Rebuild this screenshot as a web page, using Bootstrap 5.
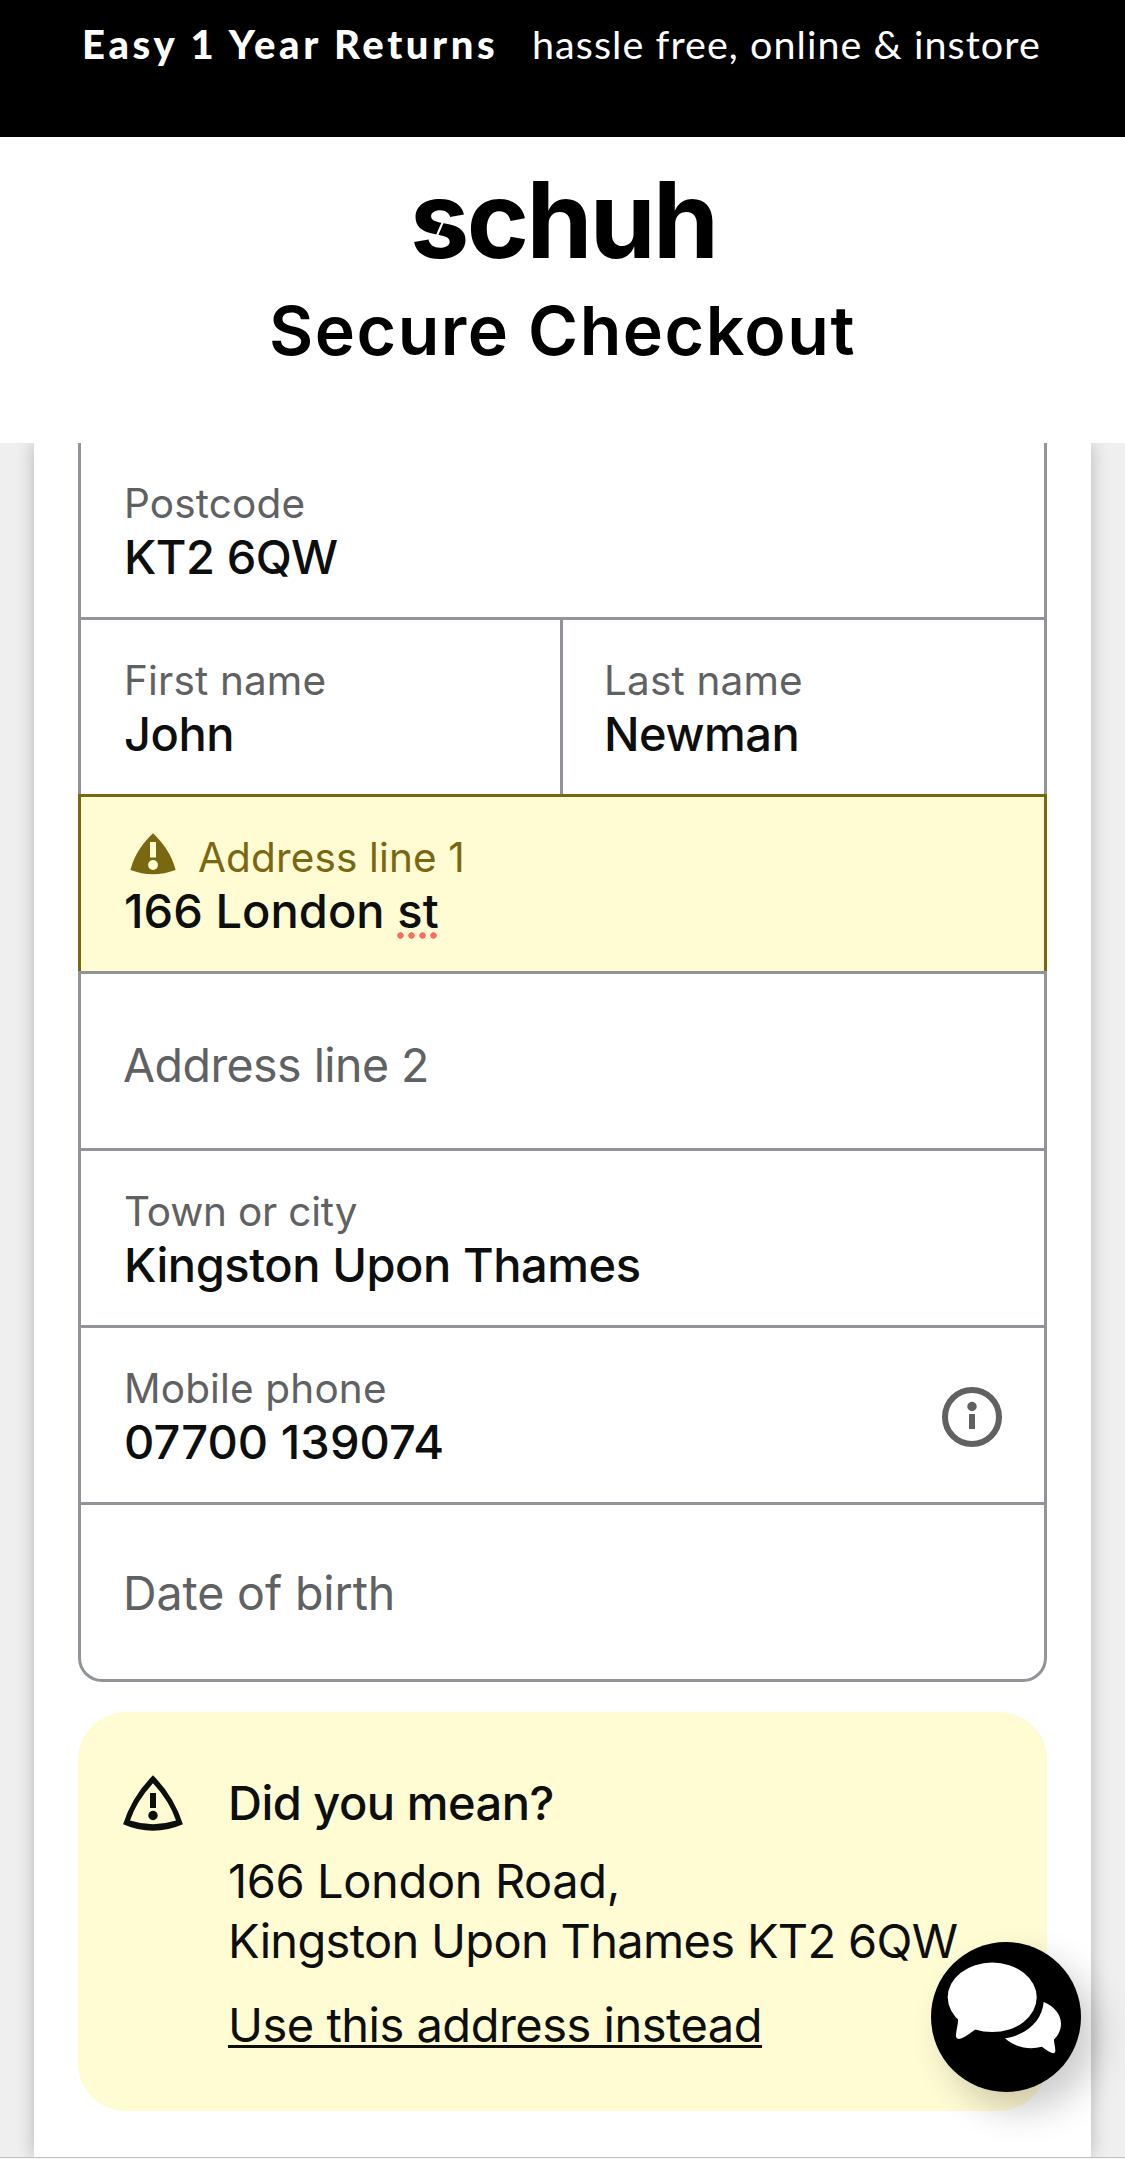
<!DOCTYPE html>
<html lang="en">
<head>
<meta charset="utf-8">
<meta name="viewport" content="width=device-width, initial-scale=1">
<title>schuh – Secure Checkout</title>
<link href="https://cdn.jsdelivr.net/npm/bootstrap@5.3.0/dist/css/bootstrap.min.css" rel="stylesheet">
<style>
  :root { --line: #919498; --ink: #0d0e0e; --muted-ink: #606162; --warn: #7a6712; --warn-bg: #fffbd3; }
  body { width: 1125px; height: 2159px; background: #efefef; color: var(--ink); font-family: Inter, "Liberation Sans", sans-serif; }
  .promo { height: 137px; padding: 20px 0 0 82px; font: 400 39.5px/47px Lato, sans-serif; }
  .promo strong { width: 450px; font-size: 40px; font-weight: 900; letter-spacing: 3.6px; }
  .promo span { letter-spacing: 1.05px; }
  .masthead { height: 306px; padding-top: 43px; z-index: 2; }
  .brand-mark { width: 300px; height: 80px; margin-left: 1px; overflow: visible; }
  .brand-mark text { font: 700 106px Inter, sans-serif; }
  .page-title { font-size: 68px; font-weight: 600; line-height: 80px; letter-spacing: 1.5px; margin: 30px 0 0 0; color: #000; }
  .sheet { width: 1057px; height: 1714px; margin-left: 34px; padding: 0 44px; box-shadow: 0 0 17px rgba(0,0,0,.24); }
  .fields { border: 3px solid var(--line); border-top: 0; border-radius: 0 0 24px 24px; }
  .field { height: 177px; padding: 36px 42px 0 42px; border-bottom: 3px solid var(--line); }
  .fields > .field:last-child { border-bottom: 0; height: 174px; }
  .field .name { font-size: 40.5px; line-height: 50px; letter-spacing: .15px; padding-left: 1px; color: var(--muted-ink); }
  .field .name.tight { letter-spacing: -.2px; }
  .field .val { font-size: 47px; line-height: 58px; margin-top: -1px; font-weight: 500; letter-spacing: -.45px; padding-left: 1px; }
  .field .val.digits { letter-spacing: .05px; }
  .field .hint { font-size: 46.5px; line-height: 58px; letter-spacing: -.55px; color: var(--muted-ink); padding-top: 26px; }
  .field .dob { padding-top: 23px; letter-spacing: -.1px; }
  .pair .field { border-bottom: 0; height: 174px; }
  .pair .field:first-child { width: 479px; }
  .pair .field:first-child { width: 481px; }
  .pair .field + .field { width: 486px; padding-left: 40px; border-left: 3px solid var(--line); }
  .pair { border-bottom: 3px solid var(--warn); margin: 0 -3px; padding: 0 3px; position: relative; }
  .flagged { background: var(--warn-bg); margin: 0 -3px; border-left: 3px solid var(--warn); border-right: 3px solid var(--warn); height: 174px; border-bottom: 0; }
  .flagged .name { color: var(--warn); gap: 22px; padding-left: 7px; }
  .after-flagged { border-top: 3px solid var(--line); height: 180px; }
  .typo { background: radial-gradient(circle at 3.5px 3.5px, #ff6b5f 2.9px, transparent 3.5px) 0 calc(100% - 1px) / 11px 7px repeat-x; display: inline-block; height: 58px; vertical-align: top; }
  .info { margin-top: 23px; }
  .suggest { height: 399px; margin-top: 30px; padding: 61px 42px 0 45px; gap: 45px; border-radius: 48px; background: var(--warn-bg); font-size: 47px; line-height: 60px; letter-spacing: -.68px; white-space: nowrap; }
  .suggest svg { margin-top: 2px; }
  .suggest .ask { font-size: 47px; line-height: 60px; font-weight: 500; letter-spacing: -.5px; }
  .suggest .place { margin: 18px 0 24px; }
  .suggest .street { letter-spacing: -.38px; }
  .suggest a { color: var(--ink); letter-spacing: -.5px; text-decoration: underline 3px; text-underline-offset: 3px; text-decoration-skip-ink: none; }
  .chat { right: 44px; top: 1942px; width: 150px; height: 150px; background: #000; box-shadow: 16px 18px 36px rgba(0,0,0,.2); z-index: 3; }
  .bottom-line { left: 0; right: 0; top: 2157px; height: 2px; background: #fafafa; border-top: 1px solid #bdbebf; z-index: 4; }
</style>
</head>
<body class="position-relative overflow-hidden">
  <div class="promo bg-black text-white d-flex align-items-baseline text-nowrap">
    <strong>Easy 1 Year Returns</strong>
    <span>hassle free, online &amp; instore</span>
  </div>
  <header class="masthead bg-white d-flex flex-column align-items-center position-relative">
    <svg class="brand-mark" viewBox="0 0 300 80" role="img" aria-label="schuh">
      <text x="-3" y="77.700" textLength="309">schuh</text>
      <line x1="32" y1="37" x2="22" y2="60" stroke="#fff" stroke-width="2"/>
    </svg>
    <h1 class="page-title text-nowrap">Secure Checkout</h1>
  </header>

  <main class="sheet bg-white">
    <section class="fields">
      <div class="field"><div class="name">Postcode</div><div class="val">KT2 6QW</div></div>
      <div class="pair d-flex">
        <div class="field"><div class="name">First name</div><div class="val">John</div></div>
        <div class="field"><div class="name">Last name</div><div class="val">Newman</div></div>
      </div>
      <div class="field flagged">
        <div class="name d-flex align-items-start">
          <svg width="46" height="42" viewBox="0 0 46 42"><path d="M23 .3C13.500 9.500 5 20 .4 37Q23 45.400 45.600 37C41 20 32.500 9.500 23 .3Z" fill="#7a6712"/><path d="M20 9h6v15.500h-6z" fill="#fffbd3"/><circle cx="23" cy="32" r="4.900" fill="#fffbd3"/></svg>
          <span>Address line 1</span>
        </div>
        <div class="val digits">166 London <span class="typo">st</span></div>
      </div>
      <div class="field after-flagged"><div class="hint">Address line 2</div></div>
      <div class="field"><div class="name tight">Town or city</div><div class="val">Kingston Upon Thames</div></div>
      <div class="field d-flex justify-content-between align-items-start">
        <div><div class="name">Mobile phone</div><div class="val digits">07700 139074</div></div>
        <svg class="info" width="60" height="60" viewBox="0 0 60 60" fill="#606162"><circle cx="30" cy="30" r="27" fill="none" stroke="#606162" stroke-width="6"/><circle cx="30" cy="19.500" r="4.700"/><path d="M27 27h6v15h-6z"/></svg>
      </div>
      <div class="field"><div class="hint dob">Date of birth</div></div>
    </section>

    <section class="suggest d-flex align-items-start">
      <svg class="flex-shrink-0" width="60" height="56" viewBox="0 0 60 56" fill="#0d0e0e"><path fill-rule="evenodd" d="M30 .2Q9 21.500.1 49.200 30 62.200 59.900 49.200 51 21.500 30 .2ZM30 8.200Q13.500 26 7 45.600 30 53 53 45.600 46.500 26 30 8.200Z"/><path d="M27 18h6v15h-6z"/><circle cx="30" cy="40.500" r="4.700"/></svg>
      <div>
        <h2 class="ask mb-0">Did you mean?</h2>
        <div class="place"><span class="street">166 London Road,</span><br>Kingston Upon Thames KT2 6QW</div>
        <a href="#">Use this address instead</a>
      </div>
    </section>
  </main>

  <button class="chat position-absolute rounded-circle border-0 p-0" aria-label="Chat">
    <svg class="d-block" width="150" height="150" viewBox="0 0 150 150" fill="#fff"><ellipse cx="61.200" cy="55.300" rx="44.500" ry="34.800"/><path d="M27.300 75.500C27 84 24.800 89 25 94.500Q25.500 98 30 96.500C35 94.500 40 90.500 45 87L46 70Z"/><path d="M112.700 60C123 64 130 72.500 130 81.500 130 88 127.500 93 123 97.500 123 102 124.500 105 124.300 109.500Q123.500 112.200 120 110.600C117 109.300 114 107 111 104.800 98 108 84 105.500 74 96.300 95 93 111 79.500 112.700 60Z"/></svg>
  </button>
  <div class="bottom-line position-absolute"></div>
<script src="https://cdn.jsdelivr.net/npm/bootstrap@5.3.0/dist/js/bootstrap.bundle.min.js"></script>
</body>
</html>
